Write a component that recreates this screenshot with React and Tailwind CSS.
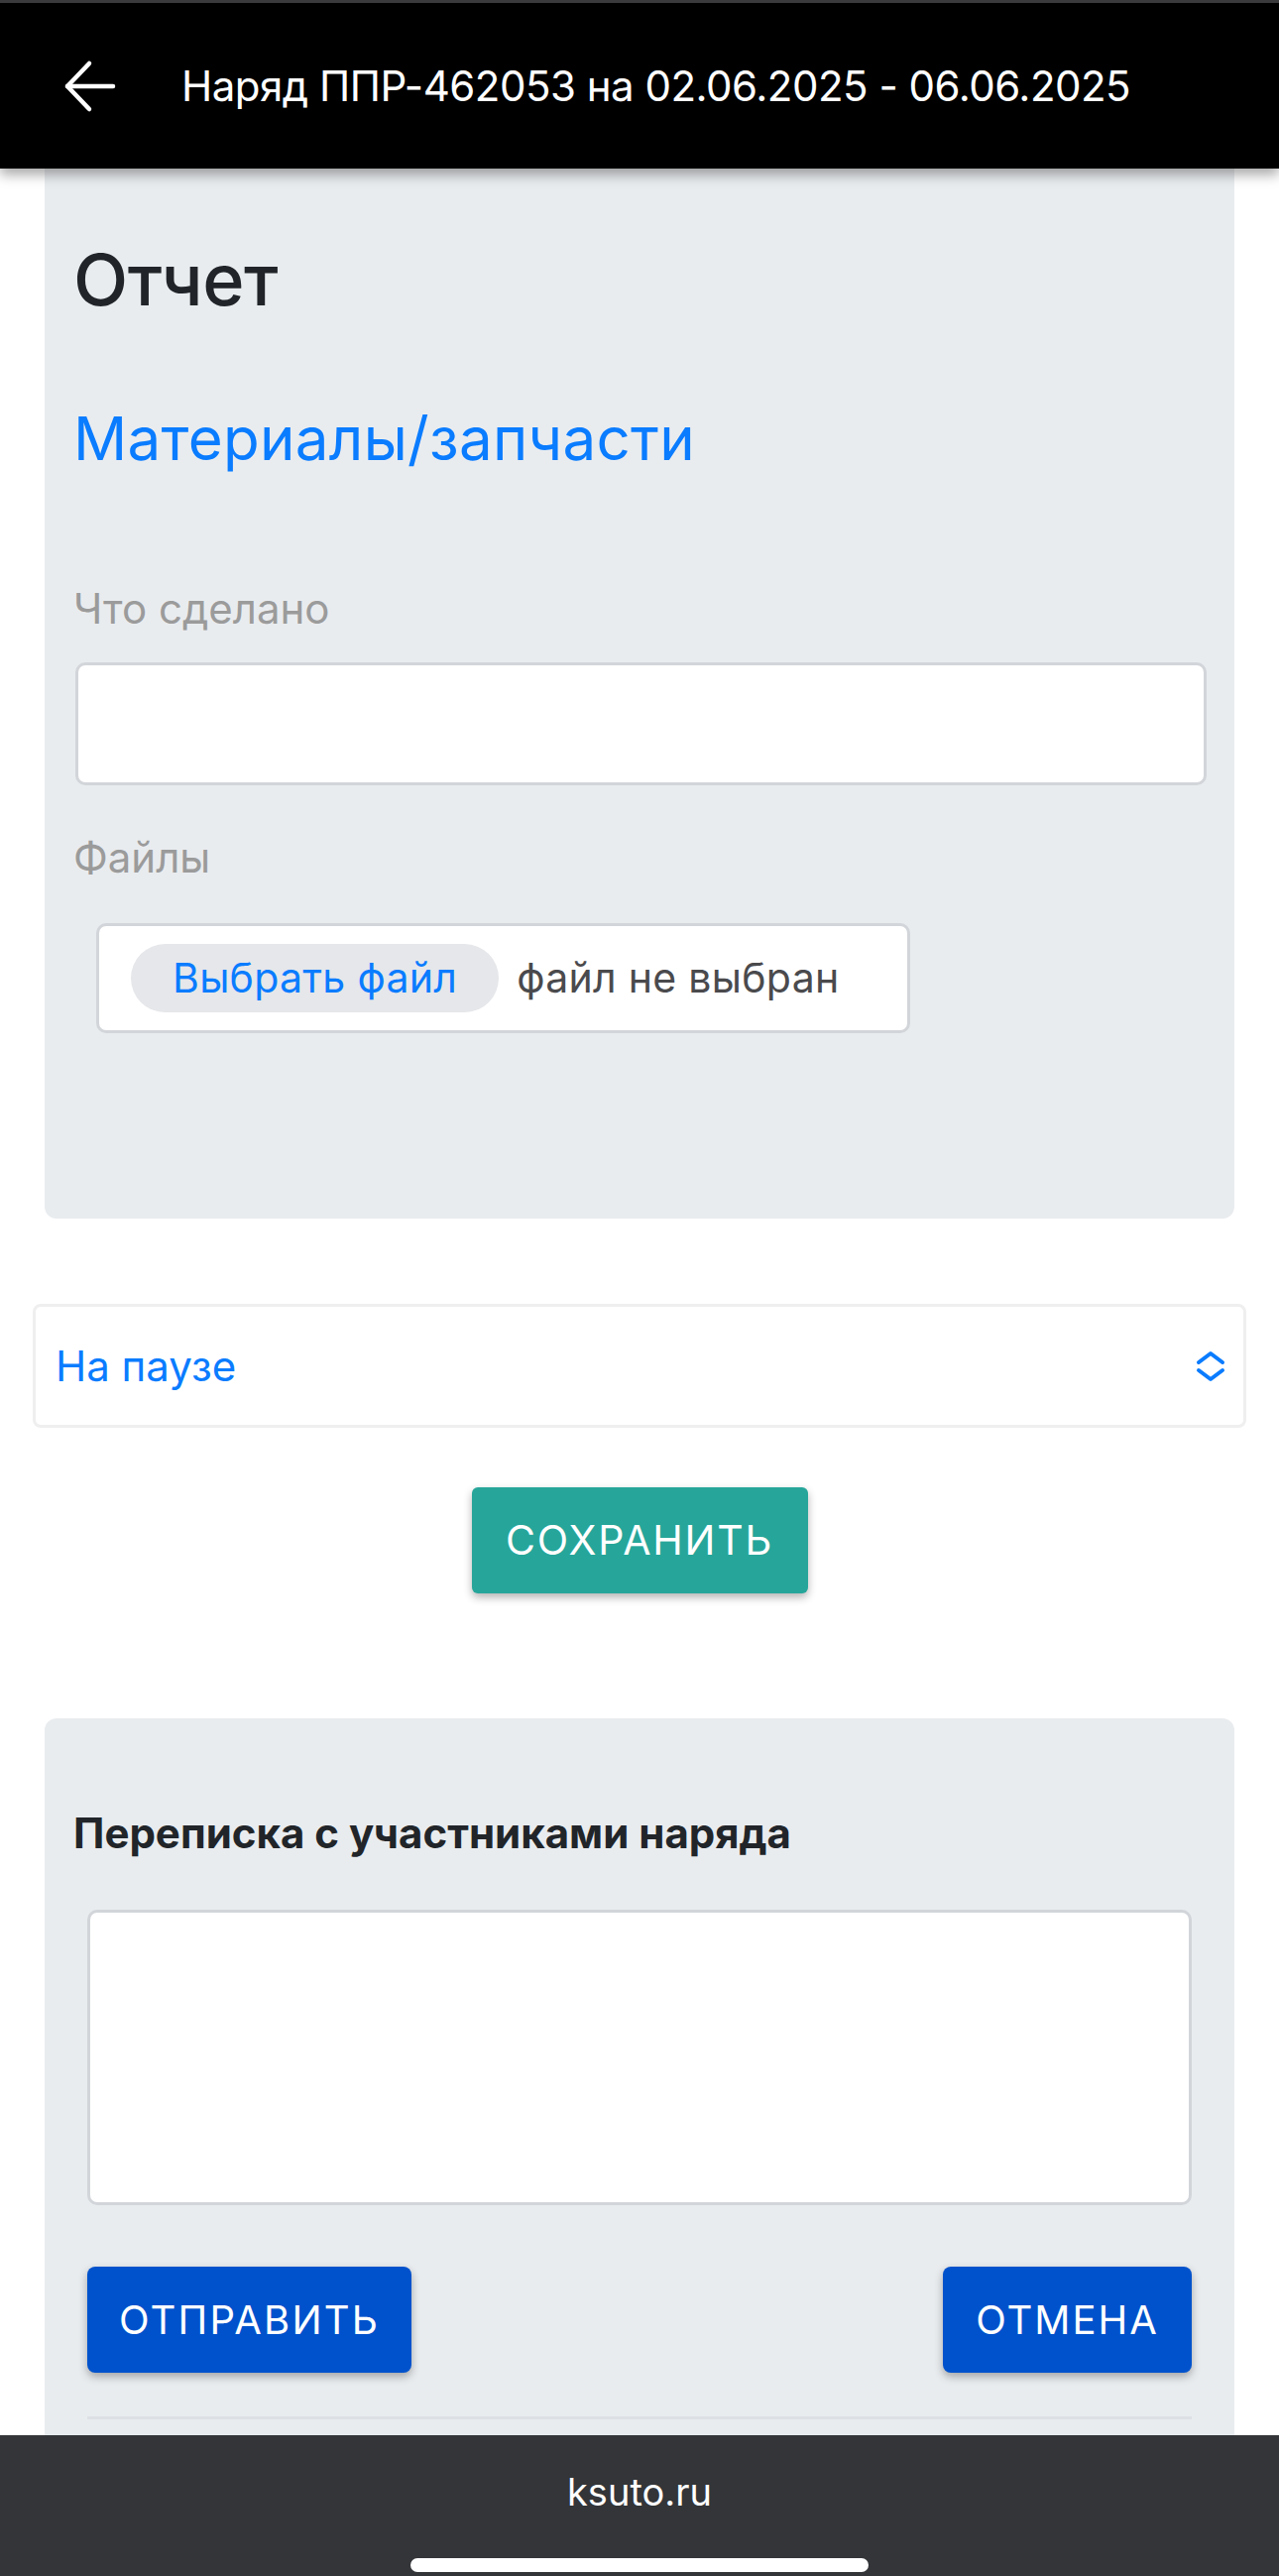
export default function App() {
  return (
    <div className="h-[2598px] w-[1290px] flex flex-col overflow-hidden bg-white font-['Inter','Noto_Sans',sans-serif]">
      <header className="relative z-10 shrink-0 shadow-[0_6px_12px_rgba(0,0,0,0.35)]">
        <div className="h-[3px] bg-[#3a3a3c]" />
        <div className="h-[167px] bg-black flex items-center">
          <svg className="ml-[64px] w-[54px] h-[54px] shrink-0" viewBox="0 0 54 54" fill="none" stroke="white" strokeWidth="4.5" strokeLinecap="round" strokeLinejoin="round">
            <path d="M4 27 H50" />
            <path d="M26 4 L4 27 L26 50" />
          </svg>
          <h1 className="ml-[65px] text-white text-[42px] leading-none font-normal whitespace-nowrap tracking-[-0.5px]">
            Наряд ППР-462053 на 02.06.2025 - 06.06.2025
          </h1>
        </div>
      </header>

      <main className="flex-1 overflow-hidden">
        <section className="mx-[45px] bg-[#e9ecef] rounded-b-[12px] pt-[76px] pl-[29px] pr-[28px] pb-[187px]">
          <h2 className="text-[72px] leading-none font-medium text-[#212529] tracking-[-0.5px]">Отчет</h2>
          <h3 className="mt-[94px] text-[60px] leading-none font-normal text-[#0a7cff] tracking-[0.3px]">Материалы/запчасти</h3>
          <div className="mt-[121px] text-[42px] leading-none text-[#9b9b9b]">Что сделано</div>
          <div className="mt-[33px] ml-[2px] h-[124px] bg-white border-[3px] border-[#d2d5d9] rounded-[10px]" />
          <div className="mt-[52px] text-[42px] leading-none text-[#9b9b9b]">Файлы</div>
          <div className="mt-[45px] ml-[23px] w-[821px] h-[111px] bg-white border-[3px] border-[#d2d5d9] rounded-[10px] flex items-center pl-[32px]">
            <div className="h-[69px] px-[42px] rounded-full bg-[#e6e7ea] flex items-center text-[41px] leading-none text-[#0a7cff] whitespace-nowrap tracking-[0.3px]">
              Выбрать файл
            </div>
            <span className="ml-[18px] text-[41px] leading-none text-[#4a4a4d] whitespace-nowrap tracking-[0.3px]">файл не выбран</span>
          </div>
        </section>

        <div className="mt-[86px] mx-[33px] h-[125px] bg-white border-[3px] border-[#efefef] rounded-[8px] flex items-center justify-between pl-[20px] pr-[18px]">
          <span className="text-[42px] leading-none text-[#0a7cff]">На паузе</span>
          <svg className="w-[30px] h-[30px]" viewBox="0 0 30 30" fill="none" stroke="#0a7cff" strokeWidth="4" strokeLinecap="round" strokeLinejoin="round" overflow="visible">
            <path d="M3 11 L15 2 L27 11" />
            <path d="M3 19 L15 28 L27 19" />
          </svg>
        </div>

        <div className="mt-[60px] flex justify-center">
          <button className="w-[339px] h-[107px] bg-[#26a69a] rounded-[6px] shadow-[0_4px_8px_rgba(0,0,0,0.3)] text-white text-[41px] leading-none tracking-[1.8px]">
            СОХРАНИТЬ
          </button>
        </div>

        <section className="mt-[126px] mx-[45px] bg-[#e9ecef] rounded-t-[12px] pt-[95px] pl-[29px] pr-[29px] pb-[200px]">
          <h3 className="text-[42px] leading-none font-bold text-[#212529]">Переписка с участниками наряда</h3>
          <div className="mt-[56px] mx-[14px] h-[298px] bg-white border-[3px] border-[#d2d5d9] rounded-[10px]" />
          <div className="mt-[62px] mx-[14px] flex justify-between">
            <button className="w-[327px] h-[107px] bg-[#0052cc] rounded-[8px] shadow-[0_4px_8px_rgba(0,0,0,0.3)] text-white text-[40px] leading-none tracking-[2.2px]">
              ОТПРАВИТЬ
            </button>
            <button className="w-[251px] h-[107px] bg-[#0052cc] rounded-[8px] shadow-[0_4px_8px_rgba(0,0,0,0.3)] text-white text-[40px] leading-none tracking-[2px]">
              ОТМЕНА
            </button>
          </div>
          <div className="mt-[44px] mx-[14px] h-[3px] bg-[#dde0e4]" />
        </section>
      </main>

      <footer className="shrink-0 h-[142px] bg-[#333538] flex flex-col items-center">
        <div className="mt-[38px] text-[38px] leading-none text-white">ksuto.ru</div>
        <div className="mt-auto mb-[4px] w-[462px] h-[14px] rounded-full bg-white" />
      </footer>
    </div>
  );
}
